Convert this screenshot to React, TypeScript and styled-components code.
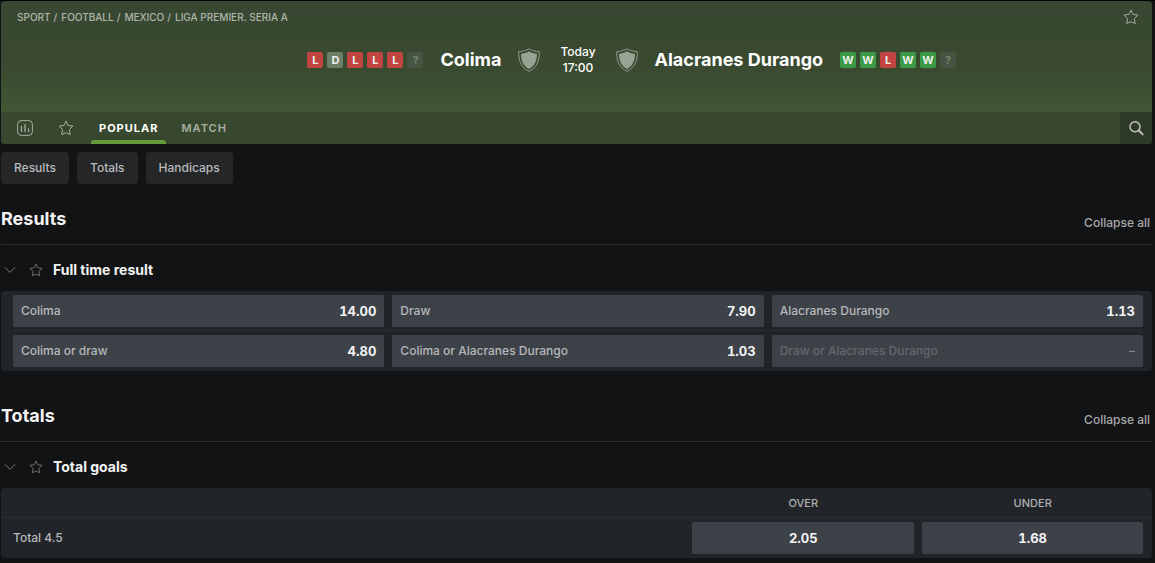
import React from "react";
import styled, { createGlobalStyle } from "styled-components";

const GlobalStyle = createGlobalStyle`
  *, *::before, *::after { box-sizing: border-box; }
  body {
    margin: 0;
    background: #121315;
    color: #fff;
    font-family: Inter, "Liberation Sans", sans-serif;
    font-size: 12px;
    line-height: 16px;
  }
  button { font: inherit; color: inherit; border: 0; background: none; padding: 0; cursor: pointer; }
  a { color: inherit; text-decoration: none; }
  h1, h2, h3, p, ol { margin: 0; padding: 0; }
  ol { list-style: none; }
`;

const Page = styled.main`
  border-top: 1px solid #000;
  padding: 0 3px 5px 1px;
`;

const EventHeader = styled.header`
  border-radius: 4px;
  overflow: hidden;
  background: linear-gradient(#374731, #3a4b31 50%, #425835 112px);
`;

const HeaderTop = styled.div`
  display: flex;
  justify-content: space-between;
  align-items: center;
  height: 32px;
  padding: 0 13px 0 16px;
`;

const Crumbs = styled.ol`
  display: flex;
  color: #afb6ac;
  font-size: 10px;
  font-weight: 500;
  text-transform: uppercase;
`;

const Crumb = styled.li`
  & + &::before {
    content: "/";
    margin: 0 4px 0 3px;
  }
`;

const IconButton = styled.button`
  display: flex;
  align-items: center;
  justify-content: center;
  color: #a5ada1;
`;

const Matchup = styled.div`
  display: grid;
  grid-template-columns: 1fr auto 1fr;
  align-items: center;
  gap: 20px;
  height: 54px;
  margin-bottom: 25px;
  padding-left: 3px;
`;

const Side = styled.div<{ $home?: boolean }>`
  display: flex;
  align-items: center;
  justify-content: ${(p) => (p.$home ? "flex-end" : "flex-start")};
  gap: 17px;
`;

const TeamName = styled.h2`
  font-size: 18px;
  line-height: 24px;
  font-weight: 700;
`;

const Kickoff = styled.p`
  text-align: center;
  font-weight: 500;
`;

const FormList = styled.div`
  display: flex;
  gap: 4px;
`;

const formColors: Record<string, string> = {
  L: "#c24440",
  W: "#3b9a45",
  D: "#6b7f69",
  "?": "#455541",
};

const FormBadge = styled.span<{ $result: string }>`
  width: 16px;
  height: 16px;
  border-radius: 2px;
  text-align: center;
  font-size: 11px;
  font-weight: 700;
  background: ${(p) => formColors[p.$result]};
  color: ${(p) => (p.$result === "?" ? "#75816f" : "#eef0ed")};
`;

const TabBar = styled.nav`
  display: flex;
  height: 32px;
  background: #37482e;
`;

const TabIcon = styled(IconButton)`
  width: 34px;
  margin: 0 0 0 7px;
`;

const Tab = styled.button<{ $active?: boolean }>`
  display: grid;
  grid-template-rows: 4px 1fr 4px;
  align-items: center;
  margin-left: 7px;
  font-size: 11px;
  font-weight: ${(p) => (p.$active ? 700 : 600)};
  letter-spacing: 1px;
  text-transform: uppercase;
  color: ${(p) => (p.$active ? "#fff" : "#a8b0a3")};
  &::before,
  &::after {
    content: "";
    height: 4px;
  }
  &::after {
    border-radius: 3px 3px 0 0;
    background: ${(p) => (p.$active ? "#639c38" : "transparent")};
  }
  & > span { padding: 0 8px; }
`;

const TabGroup = styled.div`
  display: flex;
  margin-left: 1px;
`;

const SearchButton = styled(IconButton)`
  width: 32px;
  margin-left: auto;
  background: #2e3a27;
  color: #c3c9c0;
`;

const Filters = styled.nav`
  display: flex;
  gap: 8px;
  margin-top: 8px;
`;

const Chip = styled.button`
  height: 32px;
  padding: 0 13px;
  border-radius: 4px;
  background: #242628;
  color: #b9babb;
  font-weight: 500;
`;

const Section = styled.section`
  margin-top: 17px;
  & + & { margin-top: 27px; }
`;

const SectionHead = styled.div`
  display: flex;
  align-items: center;
  justify-content: space-between;
  height: 44px;
  padding: 0 2px 8px 0;
  border-bottom: 1px solid #2b2d2f;
`;

const SectionTitle = styled.h2`
  font-size: 18px;
  line-height: 24px;
  font-weight: 700;
  color: #f3f3f3;
`;

const Collapse = styled.button`
  padding-top: 8px;
  color: #a8a9aa;
  font-weight: 500;
`;

const MarketHead = styled.div`
  display: flex;
  align-items: center;
  height: 46px;
  padding: 4px 0 0 2px;
`;

const MarketTitle = styled.h3`
  margin-left: 10px;
  font-size: 14px;
  line-height: 20px;
  font-weight: 700;
  color: #f3f3f3;
`;

const MarketToggle = styled(IconButton)`
  color: #77797b;
`;

const MarketStar = styled(IconButton)`
  margin-left: 12px;
  color: #77797b;
`;

const Panel = styled.div`
  border-radius: 4px;
  background: #212428;
  overflow: hidden;
`;

const OutcomeRows = styled(Panel)`
  padding: 0 9px 0 12px;
`;

const OutcomeRow = styled.div`
  display: grid;
  grid-template-columns: repeat(3, 1fr);
  gap: 8px;
  height: 40px;
  padding: 4px 0 3px;
  border-bottom: 1px solid #2b2e31;
  &:last-child {
    padding-bottom: 4px;
    border-bottom: 0;
  }
`;

const Outcome = styled.button`
  display: flex;
  align-items: center;
  justify-content: space-between;
  height: 32px;
  padding: 0 8px;
  border-radius: 2px;
  background: #3d4148;
  color: #b7b9bb;
  font-weight: 500;
  &:disabled { color: #64676c; cursor: default; }
`;

const Odds = styled.span<{ $off?: boolean }>`
  font-size: ${(p) => (p.$off ? "12px" : "13px")};
  font-variant-numeric: tabular-nums;
  color: ${(p) => (p.$off ? "#85888c" : "#f3f3f3")};
  font-weight: ${(p) => (p.$off ? 500 : 700)};
`;

const TotalsTable = styled.table`
  width: 100%;
  table-layout: fixed;
  border-collapse: collapse;
`;

const HeadCell = styled.th<{ $price?: boolean }>`
  width: ${(p) => (p.$price ? "20%" : "auto")};
  height: 30px;
  padding: 0 4px;
  box-shadow: inset 0 -1px #2b2e31;
  color: #b0b2b4;
  font-size: 11px;
  font-weight: 500;
  text-transform: uppercase;
  &:last-child { width: 20.3%; padding-right: 9px; }
`;

const TotalName = styled.th`
  height: 40px;
  padding: 0 12px;
  text-align: left;
  color: #b7b9bb;
  font-size: 12px;
  font-weight: 500;
`;

const PriceCell = styled.td`
  padding: 4px;
  &:last-child { padding-right: 9px; }
`;

const PriceButton = styled(Outcome)`
  width: 100%;
  justify-content: center;
`;

const Star = ({ size = 16 }: { size?: number }) => (
  <svg width={size} height={size} viewBox="0 0 16 16" fill="none" stroke="currentColor" strokeLinejoin="round" aria-hidden="true">
    <path d="M8 1.1 10 5.4l4.9.7-3.5 3.5.8 5L8 12.7l-4.2 1.9.8-5L1.1 6.1 6 5.4Z" />
  </svg>
);

const Stats = () => (
  <svg width="16" height="16" viewBox="0 0 16 16" fill="none" stroke="currentColor" strokeLinecap="round" aria-hidden="true">
    <rect x=".6" y=".6" width="14.8" height="14.8" rx="3.6" />
    <path d="M4.5 6.5v5M8 4.5v7M11.5 9v2.5" strokeWidth="1.3" />
  </svg>
);

const Search = () => (
  <svg width="16" height="16" viewBox="0 0 16 16" fill="none" stroke="currentColor" strokeLinecap="round" aria-hidden="true">
    <circle cx="7" cy="6.8" r="5" strokeWidth="1.4" />
    <path d="m10.8 10.5 3.9 3.8" strokeWidth="1.8" />
  </svg>
);

const Chevron = () => (
  <svg width="14" height="14" viewBox="0 0 14 14" fill="none" stroke="currentColor" strokeLinecap="round" strokeLinejoin="round" aria-hidden="true">
    <path d="m2.2 4.6 4.8 4.8 4.8-4.8" />
  </svg>
);

const Shield = () => (
  <svg width="22" height="24" viewBox="0 0 22 24" aria-hidden="true">
    <path
      d="M11 .7C8.3 2.5 4.5 3.5.7 3.7.5 12.5 3 19.5 11 23.3 19 19.5 21.5 12.5 21.3 3.7 17.5 3.5 13.7 2.5 11 .7Z"
      fill="none"
      stroke="#8f9c8b"
    />
    <path d="M11 3.3C8.9 4.6 6 5.5 3 5.8 3.1 12.9 5.2 17.9 11 21 16.8 17.9 18.9 12.9 19 5.8 16 5.5 13.1 4.6 11 3.3Z" fill="#98a394" />
  </svg>
);

const Form = ({ results }: { results: string }) => (
  <FormList>
    {results.split("").map((r, i) => (
      <FormBadge key={i} $result={r}>{r}</FormBadge>
    ))}
  </FormList>
);

const crumbs = ["Sport", "Football", "Mexico", "Liga Premier. Seria A"];

const resultRows: [string, string | null][][] = [
  [["Colima", "14.00"], ["Draw", "7.90"], ["Alacranes Durango", "1.13"]],
  [["Colima or draw", "4.80"], ["Colima or Alacranes Durango", "1.03"], ["Draw or Alacranes Durango", null]],
];

const Market = ({ title, market, children }: { title: string; market: string; children: React.ReactNode }) => (
  <Section>
    <SectionHead>
      <SectionTitle>{title}</SectionTitle>
      <Collapse>Collapse all</Collapse>
    </SectionHead>
    <MarketHead>
      <MarketToggle aria-label={`Collapse ${market}`}><Chevron /></MarketToggle>
      <MarketStar aria-label={`Add ${market} to favourites`}><Star size={14} /></MarketStar>
      <MarketTitle>{market}</MarketTitle>
    </MarketHead>
    {children}
  </Section>
);

export default function App() {
  return (
    <Page>
      <GlobalStyle />
      <EventHeader>
        <HeaderTop>
          <Crumbs>
            {crumbs.map((c) => (
              <Crumb key={c}><a href="#">{c}</a></Crumb>
            ))}
          </Crumbs>
          <IconButton aria-label="Add match to favourites"><Star /></IconButton>
        </HeaderTop>
        <Matchup>
          <Side $home>
            <Form results="LDLLL?" />
            <TeamName>Colima</TeamName>
            <Shield />
          </Side>
          <Kickoff>Today<br />17:00</Kickoff>
          <Side>
            <Shield />
            <TeamName>Alacranes Durango</TeamName>
            <Form results="WWLWW?" />
          </Side>
        </Matchup>
        <TabBar>
          <TabIcon aria-label="Statistics"><Stats /></TabIcon>
          <TabIcon aria-label="Favourites"><Star /></TabIcon>
          <TabGroup>
            <Tab $active><span>Popular</span></Tab>
            <Tab><span>Match</span></Tab>
          </TabGroup>
          <SearchButton aria-label="Search"><Search /></SearchButton>
        </TabBar>
      </EventHeader>
      <Filters>
        <Chip>Results</Chip>
        <Chip>Totals</Chip>
        <Chip>Handicaps</Chip>
      </Filters>
      <Market title="Results" market="Full time result">
        <OutcomeRows>
          {resultRows.map((row, i) => (
            <OutcomeRow key={i}>
              {row.map(([name, odds]) => (
                <Outcome key={name} disabled={!odds}>
                  <span>{name}</span>
                  <Odds $off={!odds}>{odds ?? "–"}</Odds>
                </Outcome>
              ))}
            </OutcomeRow>
          ))}
        </OutcomeRows>
      </Market>
      <Market title="Totals" market="Total goals">
        <Panel>
          <TotalsTable>
            <thead>
              <tr>
                <HeadCell aria-label="Total" />
                <HeadCell $price scope="col">Over</HeadCell>
                <HeadCell $price scope="col">Under</HeadCell>
              </tr>
            </thead>
            <tbody>
              <tr>
                <TotalName scope="row">Total 4.5</TotalName>
                <PriceCell><PriceButton><Odds>2.05</Odds></PriceButton></PriceCell>
                <PriceCell><PriceButton><Odds>1.68</Odds></PriceButton></PriceCell>
              </tr>
            </tbody>
          </TotalsTable>
        </Panel>
      </Market>
    </Page>
  );
}
